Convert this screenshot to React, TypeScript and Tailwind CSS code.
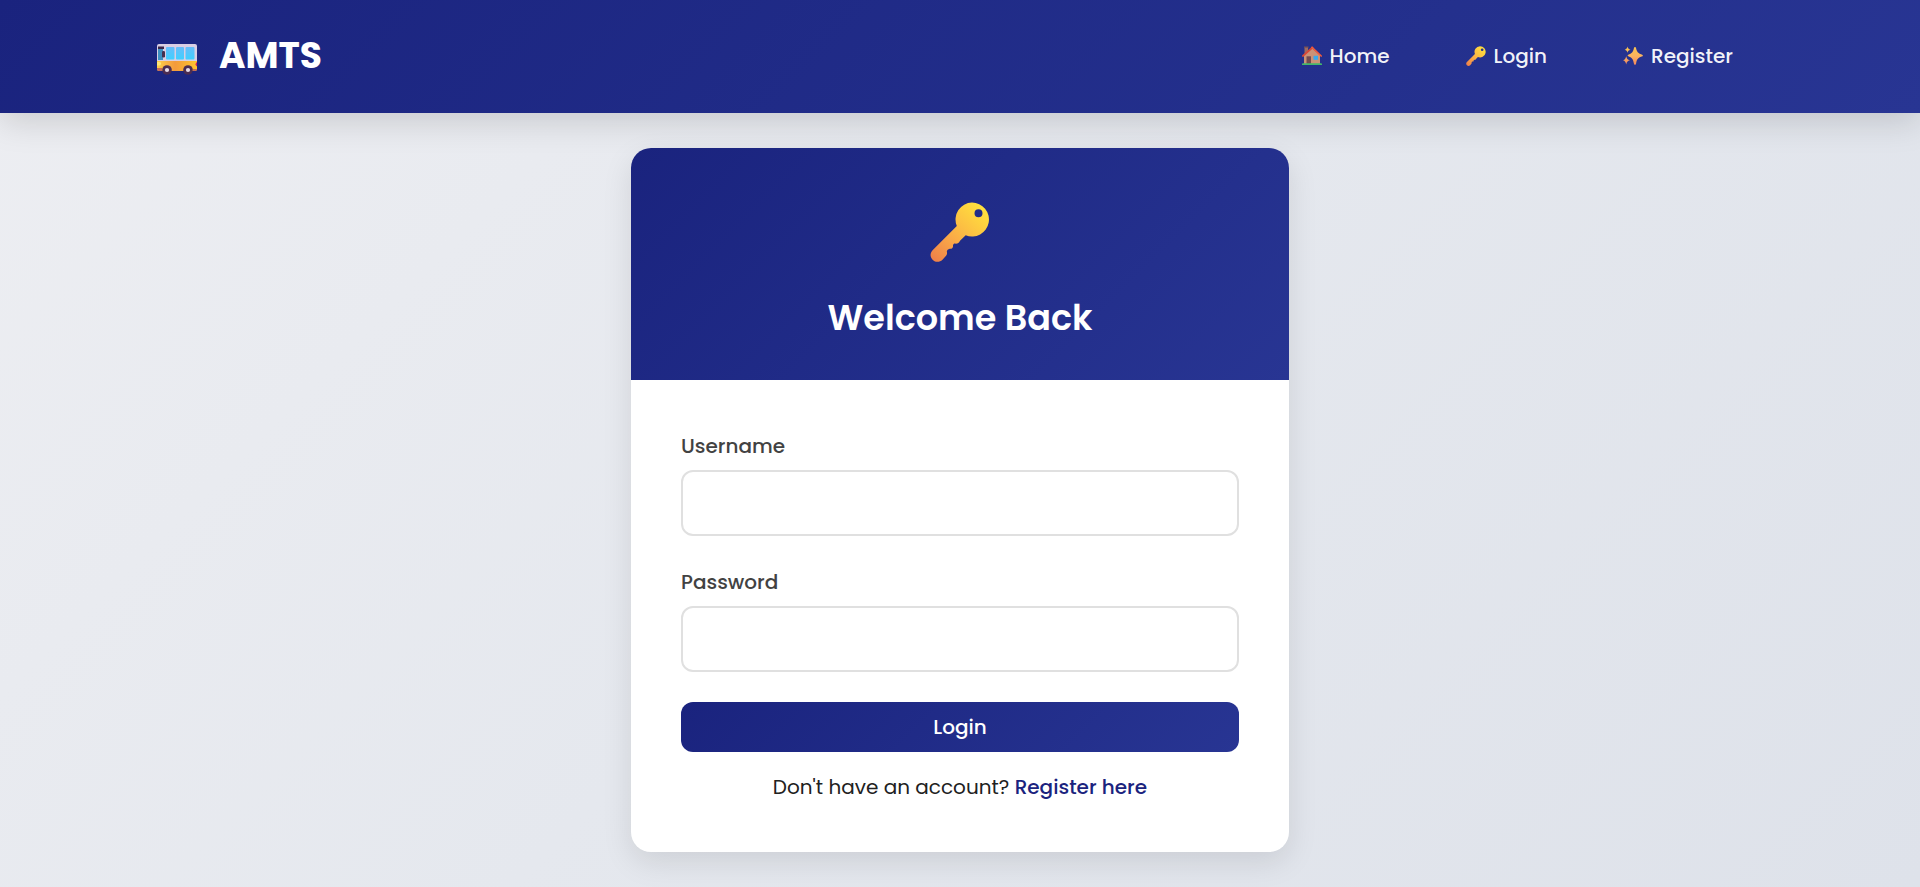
import { useId } from "react";

function BusIcon({ className }: { className?: string }) {
  const id = useId();
  return (
    <svg viewBox="0 -8 40 40" className={className} aria-hidden="true">
      <defs>
        <linearGradient id={id + "b"} x1="0" y1="0" x2="1" y2="0">
          <stop offset="0" stopColor="#ffcf4a" />
          <stop offset=".45" stopColor="#f39a3c" />
          <stop offset="1" stopColor="#ffc52e" />
        </linearGradient>
        <linearGradient id={id + "w"} x1="0" y1="0" x2="0" y2="1">
          <stop offset="0" stopColor="#67bdfa" />
          <stop offset="1" stopColor="#3fd0ff" />
        </linearGradient>
      </defs>
      <path d="M2 0h36a2 2 0 0 1 2 2v15H0V2a2 2 0 0 1 2-2z" fill="#d9cfe4" />
      <path d="M0 17h40v8a2 2 0 0 1-2 2H2a2 2 0 0 1-2-2z" fill={"url(#" + id + "b)"} />
      <path d="M1 3h5v13H1z" fill="#3e8fc0" />
      <path d="M1 2.500h6v2.500H1z" fill="#3b2648" />
      <rect x="5" y="7" width="3" height="6.500" rx="1.300" fill="#46304f" />
      <rect x="9" y="3" width="8.500" height="12.500" rx="1" fill={"url(#" + id + "w)"} />
      <rect x="19" y="3" width="8" height="12.500" rx="1" fill={"url(#" + id + "w)"} />
      <rect x="28.500" y="3" width="9" height="12.500" rx="1" fill={"url(#" + id + "w)"} />
      <path d="M0 18h2.500a1.500 1.500 0 0 1 1.500 2 2 2 0 0 1-2 1.500H0z" fill="#ffe676" />
      <path d="M40 18a2.500 2.500 0 0 0 0 4.500z" fill="#d0215b" />
      <path d="M0 24h5v3H2a2 2 0 0 1-2-2zM36 25h4a2 2 0 0 1-2 2h-2z" fill="#c56a58" />
      <circle cx="10" cy="26" r="4.800" fill="#4b2c51" />
      <circle cx="31" cy="26" r="4.800" fill="#4b2c51" />
      <circle cx="10" cy="26" r="2.100" fill="#e6dcec" />
      <circle cx="31" cy="26" r="2.100" fill="#e6dcec" />
    </svg>
  );
}

function HouseIcon({ className }: { className?: string }) {
  return (
    <svg viewBox="0 0 20 20" className={className} aria-hidden="true">
      <path d="M2.500 1h3.500v7H2.500z" fill="#9a6a62" />
      <path d="M2 0.500h4.500v1.300H2z" fill="#755057" />
      <path d="M2 9l8-7 8 7v9H2z" fill="#cb9277" />
      <path d="M10.500 1.500L0.800 10" stroke="#d94636" strokeWidth="1.700" strokeLinecap="round" />
      <path d="M10 1.300L19.200 10" stroke="#ef5a3d" strokeWidth="1.700" strokeLinecap="round" />
      <path d="M4.500 10.300h4.500V18H4.500z" fill="#744a50" />
      <path d="M11.500 9.800h4.500v4h-4.500z" fill="#38a9ef" />
      <path d="M1 17.300h18a1 1 0 0 1 1 1v.7H0v-.7a1 1 0 0 1 1-1z" fill="#43b66b" />
    </svg>
  );
}

function KeyIcon({ className }: { className?: string }) {
  const id = useId();
  return (
    <svg viewBox="1 0 60 60" className={className} aria-hidden="true">
      <defs>
        <linearGradient id={id} x1="54" y1="4" x2="4" y2="58" gradientUnits="userSpaceOnUse">
          <stop offset="0" stopColor="#ffe23d" />
          <stop offset=".4" stopColor="#fcbf43" />
          <stop offset=".65" stopColor="#f9a648" />
          <stop offset="1" stopColor="#ef8049" />
        </linearGradient>
      </defs>
      <path
        fillRule="evenodd"
        fill={"url(#" + id + ")"}
        d="M43 0.500a17 17 0 1 1-6.300 32.800L31 38.700c-1 2.700-3 3.300-5.700 2.800-1.200.8-1.500 1.500-1.200 2.700-.4 2-1.500 2.700-3.400 2.500-2 .7-3.300 1.800-2.700 3.700.3 1.600-.4 2.700-1.400 3.800l-3.100 3.500c-2.800 2.600-6.800 3-9.700.2-3-2.900-3-7 0-10L27.800 24A17 17 0 0 1 43 .5zM49.500 7.300a4 4 0 1 0 0 8 4 4 0 0 0 0-8z"
      />
    </svg>
  );
}

function SparklesIcon({ className }: { className?: string }) {
  const id = useId();
  return (
    <svg viewBox="0 0 20 20" className={className} aria-hidden="true">
      <defs>
        <linearGradient id={id} x1="0" y1="0" x2="0" y2="20" gradientUnits="userSpaceOnUse">
          <stop offset="0" stopColor="#f8c650" />
          <stop offset=".5" stopColor="#fbb35f" />
          <stop offset="1" stopColor="#f08060" />
        </linearGradient>
      </defs>
      <g fill={"url(#" + id + ")"}>
        <path d="M12 1c.6 0 .9.400 1.100 1.200.8 3.400 1.700 4.900 5.600 6.200.8.300 1.200.6 1.200 1.100s-.4.900-1.200 1.100c-3.900 1.300-4.800 2.900-5.600 6.800-.2.900-.5 1.300-1.100 1.300s-.9-.4-1.100-1.300c-.8-3.900-1.600-5.500-5.100-6.800-.8-.3-1.200-.6-1.200-1.100s.4-.8 1.200-1.100C9.300 7.100 10.100 5.600 10.900 2.200 11.100 1.400 11.400 1 12 1z" />
        <path d="M4.500.6c.5 2 1 2.500 3 3.100-2 .6-2.500 1.100-3 3.100-.5-2-1-2.500-2.800-3.100C3.500 3.100 4 2.600 4.500.6z" />
        <path d="M3.200 10.300c.6 2.600 1.200 3.300 3.800 4-2.600.8-3.200 1.500-3.800 4.100-.6-2.600-1.200-3.300-3.200-4.100 2-.7 2.600-1.400 3.200-4z" />
      </g>
    </svg>
  );
}

const navItems = [
  { label: "Home", Icon: HouseIcon },
  { label: "Login", Icon: KeyIcon },
  { label: "Register", Icon: SparklesIcon },
];

function Field({ id, label, type }: { id: string; label: string; type: string }) {
  return (
    <div className="mb-[30px]">
      <label htmlFor={id} className="mb-2 block text-xl leading-8 font-medium text-[#424242]">
        {label}
      </label>
      <input
        id={id}
        name={id}
        type={type}
        className="block h-[66px] w-full rounded-xl border-2 border-[#e0e0e0] bg-white px-5 text-xl outline-none focus:border-[#1a237e]"
      />
    </div>
  );
}

export default function App() {
  return (
    <div className="flex min-h-screen flex-col bg-linear-135 from-[#edeef2] via-[#e5e8ee] to-[#dee2ea] font-['Poppins','Inter',sans-serif] text-[#212121]">
      <header className="bg-linear-135 from-[#1a237e] to-[#283593] shadow-[0_8px_32px_rgba(0,0,0,0.15)]">
        <div className="mx-auto flex h-[113px] max-w-[1606px] items-center justify-between pb-0.5">
          <a href="#" className="flex items-center gap-[22px] text-4xl font-bold text-white">
            <BusIcon className="size-10" />
            AMTS
          </a>
          <nav className="flex gap-4">
            {navItems.map(({ label, Icon }) => (
              <a key={label} href="#" className="flex items-center gap-2 px-[30px] py-3 text-xl font-medium text-white/95">
                <Icon className="size-5" />
                {label}
              </a>
            ))}
          </nav>
        </div>
      </header>

      <main className="px-4 py-[35px]">
        <section className="mx-auto max-w-[658px] overflow-hidden rounded-[20px] bg-white shadow-[0_10px_30px_rgba(0,0,0,0.1)]">
          <div className="flex flex-col items-center bg-linear-135 from-[#1a237e] to-[#283593] px-8 pt-[54px] pb-[38px] text-white">
            <KeyIcon className="size-[60px]" />
            <h1 className="mt-8 text-[35px] leading-[48px] font-semibold">Welcome Back</h1>
          </div>
          <form className="px-[50px] pt-[50px] pb-12" onSubmit={(e) => e.preventDefault()}>
            <Field id="username" label="Username" type="text" />
            <Field id="password" label="Password" type="password" />
            <button
              type="submit"
              className="block h-[50px] w-full rounded-xl bg-linear-135 from-[#1a237e] to-[#283593] text-xl font-medium text-white"
            >
              Login
            </button>
            <p className="mt-[18px] text-center text-xl leading-[34px]">
              Don't have an account?{" "}
              <a href="#" className="font-medium text-[#1a237e]">
                Register here
              </a>
            </p>
          </form>
        </section>
      </main>
    </div>
  );
}
